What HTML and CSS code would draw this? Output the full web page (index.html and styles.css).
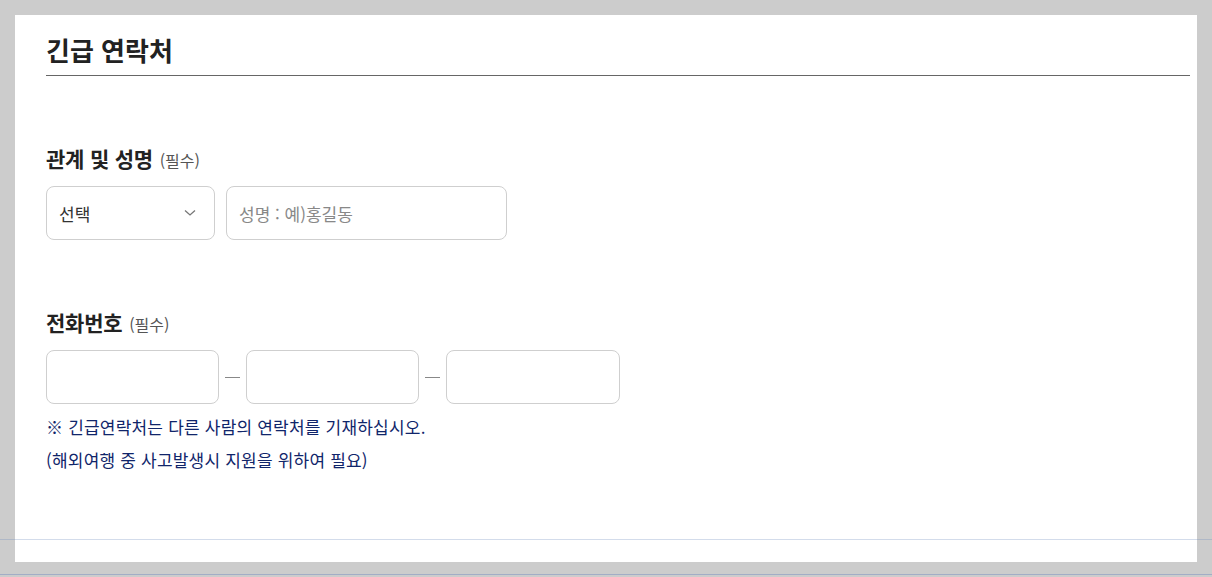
FILE: index.html
```html
<!DOCTYPE html>
<html lang="ko">
<head>
<meta charset="utf-8">
<title>긴급 연락처</title>
<link rel="stylesheet" href="styles.css">
</head>
<body>
<div class="panel">
  <h2 class="title">긴급 연락처</h2>

  <section class="field field-first">
    <div class="label">관계 및 성명 <span class="req">(필수)</span></div>
    <div class="row">
      <div class="select">
        <span class="select-text">선택</span>
        <svg class="chev" width="12" height="8" viewBox="0 0 12 8"><path d="M1 1.5 L6 6 L11 1.5" fill="none" stroke="#777" stroke-width="1.3"/></svg>
      </div>
      <div class="input input-name"><span class="placeholder">성명 : 예)홍길동</span></div>
    </div>
  </section>

  <section class="field">
    <div class="label">전화번호 <span class="req">(필수)</span></div>
    <div class="row phone-row">
      <div class="input input-phone"></div>
      <span class="dash"></span>
      <div class="input input-phone"></div>
      <span class="dash"></span>
      <div class="input input-phone"></div>
    </div>
    <p class="note">※ 긴급연락처는 다른 사람의 연락처를 기재하십시오.</p>
    <p class="note">(해외여행 중 사고발생시 지원을 위하여 필요)</p>
  </section>
</div>
<div class="overlay-line line-a"></div>
<div class="overlay-line line-b"></div>
</body>
</html>
```

FILE: styles.css
```css
html, body {
  margin: 0;
  padding: 0;
}
body {
  background: #cccccc;
  padding: 15px;
  height: 577px;
  box-sizing: border-box;
  font-family: "Noto Sans CJK KR", "Noto Sans", sans-serif;
  position: relative;
  overflow: hidden;
}
.panel {
  background: #ffffff;
  width: 1182px;
  height: 547px;
  box-sizing: border-box;
  padding: 15px 7px 0 31px;
}
.title {
  margin: 0;
  font-size: 26px;
  line-height: 40px;
  font-weight: 700;
  color: #222;
  padding-bottom: 5px;
  border-bottom: 1px solid #666;
}
.field {
  margin-top: 68px;
}
.label {
  font-size: 21px;
  line-height: 28px;
  height: 28px;
  font-weight: 700;
  color: #222;
  letter-spacing: -0.2px;
}
.req {
  font-size: 16px;
  line-height: 1;
  font-weight: 400;
  color: #555;
  margin-left: 1px;
  letter-spacing: 0;
}
.row {
  display: flex;
  align-items: center;
  gap: 11px;
  margin-top: 14px;
}
.select, .input {
  height: 54px;
  box-sizing: border-box;
  border: 1px solid #cfcfcf;
  border-radius: 8px;
  background: #fff;
  display: flex;
  align-items: center;
}
.select {
  width: 169px;
  padding: 0 18px 0 12px;
  justify-content: space-between;
}
.select-text {
  font-size: 17px;
  color: #333;
}
.chev {
  display: block;
}
.input-name {
  width: 281px;
  padding-left: 12px;
}
.placeholder {
  font-size: 17px;
  color: #888;
}
.phone-row {
  gap: 6px;
}
.input-phone {
  width: 173px;
}
.input-phone:last-child {
  width: 174px;
}
.dash {
  width: 15px;
  height: 1px;
  background: #888;
}
.note {
  margin: 0;
  font-size: 17px;
  line-height: 33px;
  letter-spacing: 0.2px;
  color: #10256a;
}
.phone-row + .note {
  margin-top: 6px;
}
.overlay-line {
  position: absolute;
  left: 0;
  right: 0;
  height: 1px;
}
.line-a {
  top: 539px;
  background: rgba(110, 140, 190, 0.3);
}
.line-b {
  top: 574px;
  background: rgba(110, 135, 190, 0.45);
}
```
